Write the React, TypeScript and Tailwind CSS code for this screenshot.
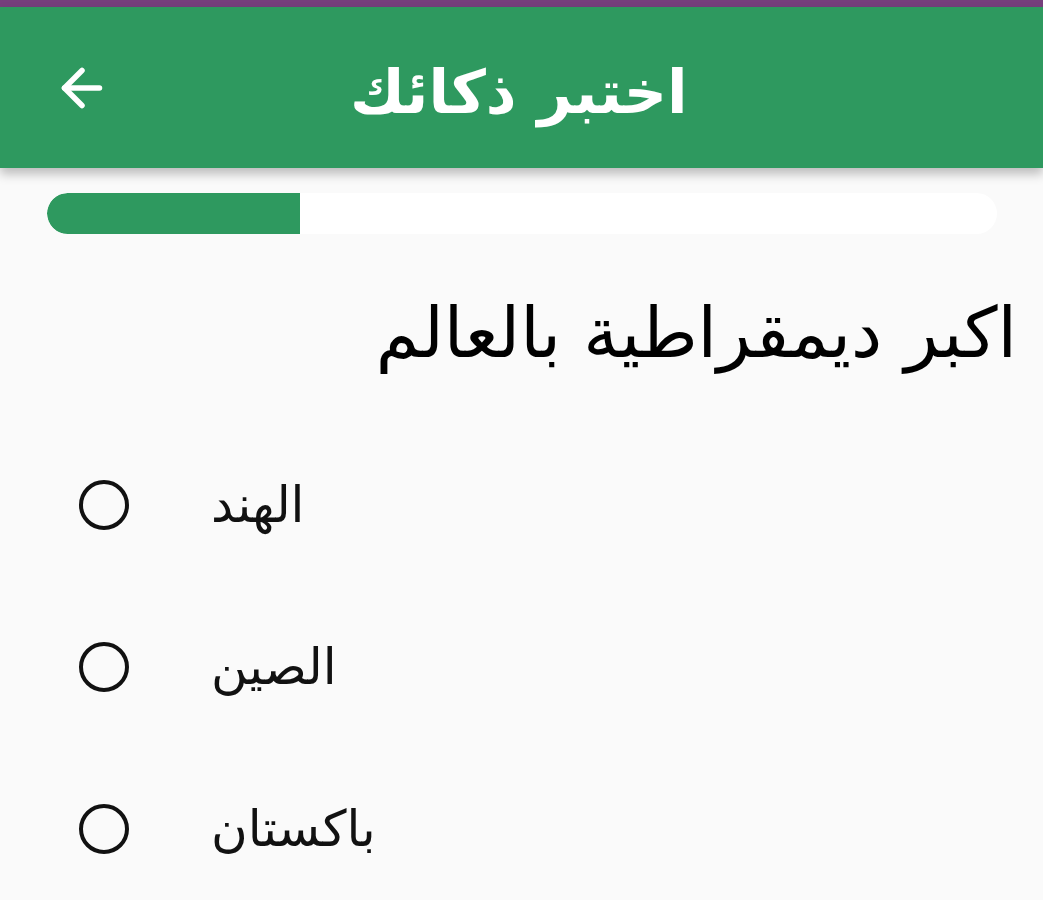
import { ArrowLeft } from "lucide-react";

const options = ["الهند", "الصين", "باكستان"];

export default function App() {
  return (
    <div
      className="min-h-[900px] bg-[#fafafa] overflow-hidden"
      style={{ fontFamily: '"DejaVu Sans", sans-serif' }}
    >
      <div className="h-[7px] bg-[#763f7c]" />
      <header className="h-[161px] bg-[#2e995f] flex items-center px-[52px] shadow-[0_6px_10px_rgba(0,0,0,0.25)] relative z-10">
        <ArrowLeft className="w-[60px] h-[60px] text-white shrink-0" strokeWidth={2.2} />
        <h1 className="text-white text-[60px] font-bold ml-[238px] mt-[8px] leading-none">
          اختبر ذكائك
        </h1>
      </header>

      <div className="px-[47px] pt-[25px]">
        <div className="h-[41px] w-[950px] bg-white rounded-full overflow-hidden">
          <div className="h-full w-[253px] bg-[#2e995f] rounded-l-full" />
        </div>
      </div>

      <h2
        dir="rtl"
        className="text-[70px] text-black pr-[26px] mt-[64px] leading-none"
      >
        اكبر ديمقراطية بالعالم
      </h2>

      <div className="mt-[112px] pl-[79px] flex flex-col gap-[112px]">
        {options.map((o) => (
          <label key={o} className="flex items-center gap-[82px] h-[50px]">
            <span className="w-[50px] h-[50px] rounded-full border-[4px] border-[#111] shrink-0" />
            <span className="text-[50px] text-[#111] leading-none">{o}</span>
          </label>
        ))}
      </div>
    </div>
  );
}
